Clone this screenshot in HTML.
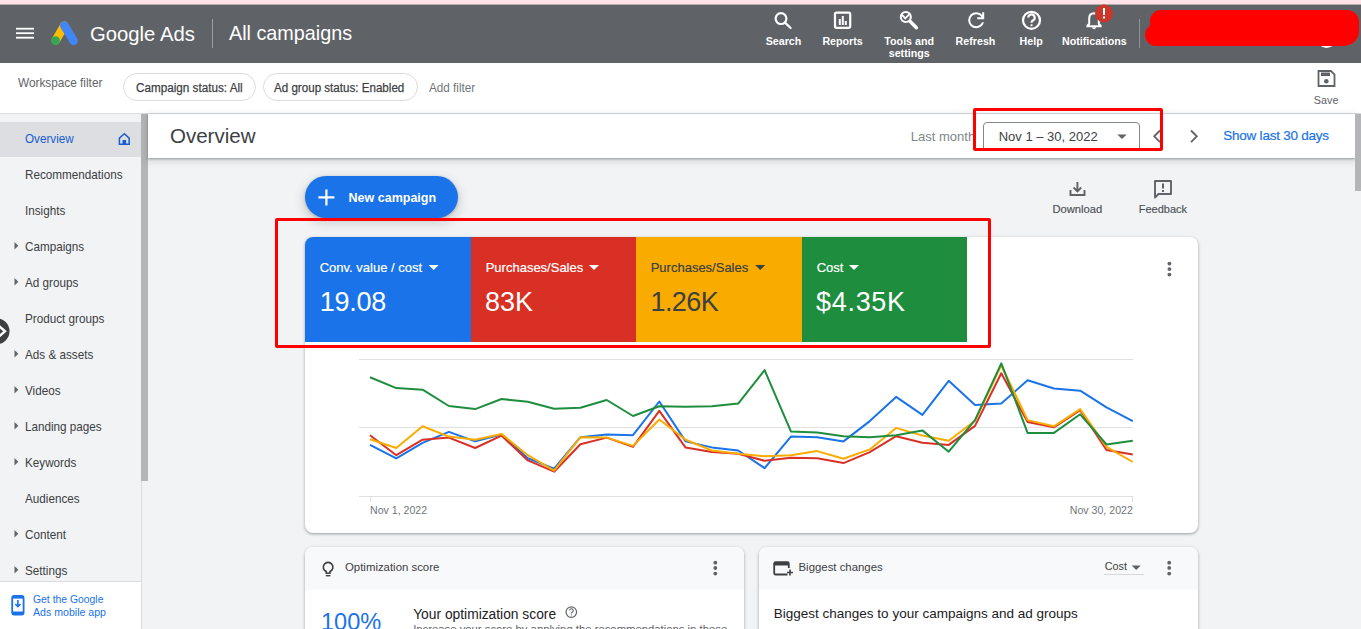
<!DOCTYPE html>
<html><head><meta charset="utf-8"><title>Google Ads</title><style>
*{box-sizing:border-box;margin:0;padding:0}
html,body{width:1361px;height:629px;overflow:hidden;background:#f1f3f4;font-family:"Liberation Sans",sans-serif;position:relative}
.a{position:absolute}
.t{position:absolute;line-height:1;white-space:nowrap}
svg{position:absolute;overflow:visible}
</style></head><body>
<div class="a" style="left:0px;top:0px;width:1361px;height:4px;background:#fde2e7"></div>
<div class="a" style="left:0px;top:4px;width:1361px;height:1px;background:#b9a9ad"></div>
<div class="a" style="left:0px;top:5px;width:1361px;height:58px;background:#5f6368"></div>
<svg style="left:0;top:0" width="1" height="1"><g fill="#fff"><rect x="16" y="27.8" width="18" height="1.8"/><rect x="16" y="32.3" width="18" height="1.8"/><rect x="16" y="36.8" width="18" height="1.8"/></g></svg>
<svg style="left:0;top:0" width="1" height="1"><line x1="64.3" y1="25.6" x2="55.8" y2="40.3" stroke="#fbbc04" stroke-width="8.6" stroke-linecap="round"/><line x1="64.3" y1="25.6" x2="73.6" y2="40.8" stroke="#4285f4" stroke-width="8.6" stroke-linecap="round"/><circle cx="55.6" cy="40.6" r="4.4" fill="#34a853"/></svg>
<div class="t" style="left:90px;top:23.82px;font-size:20.3px;color:#fff;">Google Ads</div>
<div class="a" style="left:212px;top:19px;width:1px;height:29px;background:#9a9da1"></div>
<div class="t" style="left:229px;top:24.24px;font-size:19.8px;color:#fff;">All campaigns</div>
<div class="t" style="left:783.5px;transform:translateX(-50%) ;top:35.94px;font-size:10.7px;color:#fff;font-weight:bold;">Search</div>
<div class="t" style="left:842.6px;transform:translateX(-50%) ;top:35.94px;font-size:10.7px;color:#fff;font-weight:bold;">Reports</div>
<div class="t" style="left:975.5px;transform:translateX(-50%) ;top:35.94px;font-size:10.7px;color:#fff;font-weight:bold;">Refresh</div>
<div class="t" style="left:1031.2px;transform:translateX(-50%) ;top:35.94px;font-size:10.7px;color:#fff;font-weight:bold;">Help</div>
<div class="t" style="left:1094.3px;transform:translateX(-50%) ;top:35.94px;font-size:10.7px;color:#fff;font-weight:bold;">Notifications</div>
<div class="t" style="left:909.2px;transform:translateX(-50%) ;top:35.94px;font-size:10.7px;color:#fff;font-weight:bold;">Tools and</div>
<div class="t" style="left:909.2px;transform:translateX(-50%) ;top:47.74px;font-size:10.7px;color:#fff;font-weight:bold;">settings</div>
<svg style="left:0;top:0" width="1" height="1">
<g fill="none" stroke="#fff" stroke-width="2.2">
<circle cx="781" cy="18.6" r="5.4"/>
<line x1="785" y1="22.6" x2="790.6" y2="28" stroke-linecap="round"/>
<rect x="835" y="12.6" width="15.2" height="15.2" rx="1.5"/>
<circle cx="1031.5" cy="20.3" r="8.5" stroke-width="2.2"/>

</g>
<g fill="#fff">
<rect x="838.8" y="19" width="2" height="6"/><rect x="841.8" y="16" width="2" height="9"/><rect x="844.8" y="21" width="2" height="4"/>
<path transform="translate(964.2,8.2)" d="M12 20q-3.35 0-5.675-2.325Q4 15.35 4 12q0-3.35 2.325-5.675Q8.65 4 12 4q1.725 0 3.3.713 1.575.712 2.7 2.037V4h2v7h-7V9h4.2q-.8-1.4-2.187-2.2Q13.625 6 12 6 9.5 6 7.75 7.75T6 12q0 2.5 1.75 4.25T12 18q1.925 0 3.475-1.1T17.65 14h2.1q-.7 2.65-2.85 4.325Q14.75 20 12 20Z"/>
<path d="M1028.3 17.6 a3.2 3.2 0 1 1 4.6 2.9 c-1 .5 -1.4 1 -1.4 2.3" fill="none" stroke="#fff" stroke-width="2.1"/>
<rect x="1030.6" y="24.3" width="1.9" height="1.9"/>
<path d="M1094 13.2 c-3.2 0 -4.8 2.4 -4.8 5.4 v5.2 l-1.8 1.8 v.6 h13.2 v-.6 l-1.8 -1.8 v-5.2 c0 -3 -1.6 -5.4 -4.8 -5.4z" fill="none" stroke="#fff" stroke-width="2"/>
<path d="M1092 27.3 h4 a2 2 0 0 1 -4 0z"/>

</g>
<g fill="none" stroke="#fff" stroke-linecap="round"><circle cx="905.8" cy="17" r="5" stroke-width="2.1"/><path d="M902.3 15.2 l2.9 3.2 l3.6 -3.6" stroke-width="1.8"/><path d="M910 21.3 l6.4 6.4" stroke-width="3.4"/></g>
<circle cx="1104" cy="13.5" r="9" fill="#c8372a"/>
<rect x="1103" y="8" width="2" height="7" fill="#fff"/><rect x="1103" y="16.5" width="2" height="2" fill="#fff"/>
</svg>
<div class="a" style="left:1139px;top:19px;width:1px;height:29px;background:#8e9195"></div>
<svg style="left:0;top:0" width="1" height="1"><circle cx="1326.5" cy="38" r="10" fill="#fff"/></svg>
<div class="a" style="left:1150px;top:10px;width:209px;height:36px;background:#ff0000;border-radius:11px 12px 15px 6px"></div>
<div class="a" style="left:1145px;top:24px;width:180px;height:22px;background:#ff0000;border-radius:11px"></div>
<div class="a" style="left:0px;top:63px;width:1361px;height:50px;background:#fff"></div>
<div class="a" style="left:0px;top:113px;width:1361px;height:1px;background:#dadce0"></div>
<div class="t" style="left:17.6px;transform:scaleX(0.9346);transform-origin:0 0;top:76.81px;font-size:12.63px;color:#5f6368;">Workspace filter</div>
<div class="a" style="left:123px;top:73px;width:132.5px;height:28px;border:1px solid #dadce0;border-radius:14px"></div>
<div class="t" style="left:135.8px;transform:scaleX(0.8850);transform-origin:0 0;top:80.81px;font-size:13.22px;color:#3c4043;-webkit-text-stroke:0.25px #3c4043">Campaign status: All</div>
<div class="a" style="left:263px;top:73px;width:154.6px;height:28px;border:1px solid #dadce0;border-radius:14px"></div>
<div class="t" style="left:274.4px;transform:scaleX(0.8850);transform-origin:0 0;top:80.90px;font-size:13.11px;color:#3c4043;-webkit-text-stroke:0.25px #3c4043">Ad group status: Enabled</div>
<div class="t" style="left:428.5px;transform:scaleX(0.8850);transform-origin:0 0;top:80.81px;font-size:13.22px;color:#70757a;">Add filter</div>
<svg style="left:0;top:0" width="1" height="1"><path d="M1318.5 71 h12.5 l3.5 3.5 v11.5 h-16z" fill="none" stroke="#5f6368" stroke-width="1.8"/><rect x="1321" y="72.5" width="9" height="3.5" fill="#5f6368"/><circle cx="1326.3" cy="81.3" r="2.3" fill="#5f6368"/></svg>
<div class="t" style="left:1313.8px;top:94.86px;font-size:10.8px;color:#5f6368;">Save</div>
<div class="a" style="left:0px;top:114px;width:141px;height:467px;background:#f1f3f4"></div>
<div class="a" style="left:0px;top:122px;width:141px;height:35px;background:#dcdee1"></div>
<div class="a" style="left:141px;top:114px;width:7px;height:367px;background:#b4b5b7"></div>
<div class="a" style="left:141px;top:481px;width:1px;height:148px;background:#dadce0"></div>
<div class="t" style="left:25px;transform:scaleX(0.8929);transform-origin:0 0;top:131.91px;font-size:13.1px;color:#1a5dd0;">Overview</div>
<div class="t" style="left:25px;transform:scaleX(0.8929);transform-origin:0 0;top:167.91px;font-size:13.1px;color:#3c4043;">Recommendations</div>
<div class="t" style="left:25px;transform:scaleX(0.8929);transform-origin:0 0;top:203.91px;font-size:13.1px;color:#3c4043;">Insights</div>
<div class="t" style="left:25px;transform:scaleX(0.8929);transform-origin:0 0;top:239.91px;font-size:13.1px;color:#3c4043;">Campaigns</div>
<svg style="left:0;top:0" width="1" height="1"><path d="M14.5 242 l3.8 3.8 l-3.8 3.8z" fill="#5f6368"/></svg>
<div class="t" style="left:25px;transform:scaleX(0.8929);transform-origin:0 0;top:275.91px;font-size:13.1px;color:#3c4043;">Ad groups</div>
<svg style="left:0;top:0" width="1" height="1"><path d="M14.5 278 l3.8 3.8 l-3.8 3.8z" fill="#5f6368"/></svg>
<div class="t" style="left:25px;transform:scaleX(0.8929);transform-origin:0 0;top:311.91px;font-size:13.1px;color:#3c4043;">Product groups</div>
<div class="t" style="left:25px;transform:scaleX(0.8929);transform-origin:0 0;top:347.91px;font-size:13.1px;color:#3c4043;">Ads &amp; assets</div>
<svg style="left:0;top:0" width="1" height="1"><path d="M14.5 350 l3.8 3.8 l-3.8 3.8z" fill="#5f6368"/></svg>
<div class="t" style="left:25px;transform:scaleX(0.8929);transform-origin:0 0;top:383.91px;font-size:13.1px;color:#3c4043;">Videos</div>
<svg style="left:0;top:0" width="1" height="1"><path d="M14.5 386 l3.8 3.8 l-3.8 3.8z" fill="#5f6368"/></svg>
<div class="t" style="left:25px;transform:scaleX(0.8929);transform-origin:0 0;top:419.91px;font-size:13.1px;color:#3c4043;">Landing pages</div>
<svg style="left:0;top:0" width="1" height="1"><path d="M14.5 422 l3.8 3.8 l-3.8 3.8z" fill="#5f6368"/></svg>
<div class="t" style="left:25px;transform:scaleX(0.8929);transform-origin:0 0;top:455.91px;font-size:13.1px;color:#3c4043;">Keywords</div>
<svg style="left:0;top:0" width="1" height="1"><path d="M14.5 458 l3.8 3.8 l-3.8 3.8z" fill="#5f6368"/></svg>
<div class="t" style="left:25px;transform:scaleX(0.8929);transform-origin:0 0;top:491.91px;font-size:13.1px;color:#3c4043;">Audiences</div>
<div class="t" style="left:25px;transform:scaleX(0.8929);transform-origin:0 0;top:527.91px;font-size:13.1px;color:#3c4043;">Content</div>
<svg style="left:0;top:0" width="1" height="1"><path d="M14.5 530 l3.8 3.8 l-3.8 3.8z" fill="#5f6368"/></svg>
<div class="t" style="left:25px;transform:scaleX(0.8929);transform-origin:0 0;top:563.91px;font-size:13.1px;color:#3c4043;">Settings</div>
<svg style="left:0;top:0" width="1" height="1"><path d="M14.5 566 l3.8 3.8 l-3.8 3.8z" fill="#5f6368"/></svg>
<svg style="left:0;top:0" width="1" height="1"><path d="M124.3 133.8 l-4.9 4.3 v6.1 h9.8 v-6.1z" fill="none" stroke="#1a5dd0" stroke-width="1.5" stroke-linejoin="miter"/><rect x="122.5" y="140" width="3.6" height="4.5" fill="#1a5dd0"/></svg>
<svg style="left:0;top:0" width="1" height="1"><circle cx="-3.5" cy="331.3" r="13" fill="#3c4043"/><path d="M-1 326 l6 5.3 l-6 5.3" fill="none" stroke="#fff" stroke-width="2.4"/></svg>
<div class="a" style="left:0px;top:581px;width:141px;height:48px;background:#fff;border-top:1px solid #dadce0"></div>
<svg style="left:0;top:0" width="1" height="1"><rect x="12.2" y="596" width="11.4" height="18.6" rx="2" fill="none" stroke="#1a73e8" stroke-width="1.8"/><rect x="12.2" y="596" width="11.4" height="2.6" fill="#1a73e8"/><rect x="12.2" y="611.5" width="11.4" height="3" fill="#1a73e8"/><path d="M17.9 600 v6.5 M15.3 604 l2.6 2.6 l2.6 -2.6" fill="none" stroke="#1a73e8" stroke-width="1.6"/></svg>
<div class="t" style="left:32.5px;transform:scaleX(0.9259);transform-origin:0 0;top:593.69px;font-size:11.23px;color:#1a73e8;">Get the Google</div>
<div class="t" style="left:32.5px;transform:scaleX(0.9259);transform-origin:0 0;top:606.61px;font-size:11.45px;color:#1a73e8;">Ads mobile app</div>
<div class="a" style="left:148px;top:114px;width:1207px;height:44px;background:#fff;box-shadow:0 1px 2px rgba(60,64,67,.4),0 2px 6px 2px rgba(60,64,67,.15)"></div>
<div class="a" style="left:1355px;top:114px;width:6px;height:77px;background:#b4b5b7"></div>
<div class="t" style="left:170px;top:125.65px;font-size:20.5px;color:#3c4043;">Overview</div>
<div class="t" style="left:910.8px;top:130.00px;font-size:13.0px;color:#80868b;">Last month</div>
<div class="a" style="left:983px;top:122.4px;width:157px;height:28px;background:#fff;border:1px solid #80868b;border-radius:4px 4px 0 0"></div>
<div class="t" style="left:998.7px;top:129.90px;font-size:13.0px;color:#3c4043;">Nov 1 &ndash; 30, 2022</div>
<svg style="left:0;top:0" width="1" height="1"><path d="M1117.3 134.4 h9.4 l-4.7 4.7z" fill="#5f6368"/><path d="M1160 130.5 l-5.8 5.8 l5.8 5.8 M1191 130.5 l5.8 5.8 l-5.8 5.8" fill="none" stroke="#5f6368" stroke-width="1.8"/></svg>
<div class="t" style="left:1223.3px;top:128.57px;font-size:13.5px;color:#1a73e8;letter-spacing:-0.24px;-webkit-text-stroke:0.2px #1a73e8">Show last 30 days</div>
<div class="a" style="left:305px;top:175.6px;width:153px;height:42px;background:#1a73e8;border-radius:21px;box-shadow:0 1px 3px rgba(60,64,67,.3),0 4px 8px 3px rgba(60,64,67,.15)"></div>
<svg style="left:0;top:0" width="1" height="1"><path d="M326.4 189.4 v16 M318.4 197.4 h16" stroke="#fff" stroke-width="2.2"/></svg>
<div class="t" style="left:348.6px;top:191.72px;font-size:12.5px;color:#fff;font-weight:bold;">New campaign</div>
<svg style="left:0;top:0" width="1" height="1"><g fill="none" stroke="#5f6368" stroke-width="1.9"><path d="M1077.4 182 v9 M1073.6 187.5 l3.8 3.8 l3.8 -3.8"/><path d="M1070.5 190 v5 h14 v-5"/><path d="M1155 181 h16 v13 h-12.5 l-3.5 3.5z" stroke-linejoin="round"/></g><rect x="1162" y="183.5" width="2" height="5" fill="#5f6368"/><rect x="1162" y="190" width="2" height="2" fill="#5f6368"/></svg>
<div class="t" style="left:1052.4px;top:203.52px;font-size:11.2px;color:#4d5156;-webkit-text-stroke:0.15px #4d5156">Download</div>
<div class="t" style="left:1138.7px;top:203.69px;font-size:11.0px;color:#4d5156;-webkit-text-stroke:0.15px #4d5156">Feedback</div>
<div class="a" style="left:305px;top:237px;width:893px;height:296px;background:#fff;border-radius:8px;box-shadow:0 1px 2px rgba(60,64,67,.3),0 1px 3px 1px rgba(60,64,67,.15)"></div>
<div class="a" style="left:305px;top:237px;width:166px;height:105px;background:#1a73e8;border-radius:8px 0 0 0;"></div>
<div class="a" style="left:471px;top:237px;width:165px;height:105px;background:#d93025;"></div>
<div class="a" style="left:636px;top:237px;width:166px;height:105px;background:#f9ab00;"></div>
<div class="a" style="left:802px;top:237px;width:165px;height:105px;background:#1e8e3e;"></div>
<div class="t" style="left:319.7px;top:261.40px;font-size:13.0px;color:#fff;-webkit-text-stroke:0.2px #fff">Conv. value / cost</div>
<div class="t" style="left:319.8px;top:289.14px;font-size:27.0px;color:#fff;letter-spacing:-0.3px">19.08</div>
<svg style="left:0;top:0" width="1" height="1"><path d="M428.6 265 h10 l-5 5z" fill="#fff"/></svg>
<div class="t" style="left:485.7px;top:261.40px;font-size:13.0px;color:#fff;-webkit-text-stroke:0.2px #fff">Purchases/Sales</div>
<div class="t" style="left:485px;top:289.14px;font-size:27.0px;color:#fff;letter-spacing:0px">83K</div>
<svg style="left:0;top:0" width="1" height="1"><path d="M589 265 h10 l-5 5z" fill="#fff"/></svg>
<div class="t" style="left:650.7px;top:261.40px;font-size:13.0px;color:#3c4043;-webkit-text-stroke:0.2px #3c4043">Purchases/Sales</div>
<div class="t" style="left:650.5px;top:289.14px;font-size:27.0px;color:#3c4043;letter-spacing:-0.6px">1.26K</div>
<svg style="left:0;top:0" width="1" height="1"><path d="M755.2 265 h10 l-5 5z" fill="#3c4043"/></svg>
<div class="t" style="left:816.7px;top:261.40px;font-size:13.0px;color:#fff;-webkit-text-stroke:0.2px #fff">Cost</div>
<div class="t" style="left:816px;top:289.14px;font-size:27.0px;color:#fff;letter-spacing:0.7px">$4.35K</div>
<svg style="left:0;top:0" width="1" height="1"><path d="M849 265 h10 l-5 5z" fill="#fff"/></svg>
<svg style="left:0;top:0" width="1" height="1"><circle cx="1169.4" cy="263.6" r="1.9" fill="#5f6368"/><circle cx="1169.4" cy="269.1" r="1.9" fill="#5f6368"/><circle cx="1169.4" cy="274.6" r="1.9" fill="#5f6368"/></svg>
<svg style="left:0;top:0" width="1" height="1"><g fill="#e0e0e0"><rect x="359" y="359" width="774" height="1"/><rect x="359" y="427" width="774" height="1"/><rect x="359" y="496" width="774" height="1"/><rect x="370" y="496" width="1" height="6"/><rect x="1132" y="496" width="1" height="6"/></g><polyline points="370.0,444.9 396.3,458.3 422.6,442.8 448.9,431.9 475.2,441.4 501.5,434.5 527.8,458.3 554.1,468.6 580.4,437.2 606.7,434.5 633.0,435.2 659.3,401.5 685.6,441.4 711.9,447.4 738.2,450.5 764.6,468.2 790.9,436.6 817.2,437.2 843.5,441.4 869.8,421.1 896.1,396.9 922.4,414.9 948.7,380.8 975.0,405.0 1001.3,403.6 1027.6,380.2 1053.9,388.5 1080.2,390.7 1106.5,407.3 1132.8,421.1" fill="none" stroke="#1a73e8" stroke-width="2" stroke-linejoin="round"/><polyline points="370.0,435.2 396.3,455.2 422.6,439.7 448.9,437.6 475.2,448.0 501.5,435.6 527.8,460.4 554.1,471.7 580.4,444.3 606.7,437.6 633.0,446.9 659.3,410.8 685.6,447.6 711.9,452.1 738.2,453.8 764.6,460.8 790.9,457.7 817.2,458.3 843.5,463.1 869.8,452.1 896.1,436.2 922.4,442.8 948.7,444.9 975.0,425.9 1001.3,373.2 1027.6,422.1 1053.9,427.3 1080.2,410.2 1106.5,450.0 1132.8,454.6" fill="none" stroke="#d93025" stroke-width="2" stroke-linejoin="round"/><polyline points="370.0,439.3 396.3,448.0 422.6,426.3 448.9,436.6 475.2,439.7 501.5,433.9 527.8,455.2 554.1,470.7 580.4,437.2 606.7,437.6 633.0,445.9 659.3,419.5 685.6,439.7 711.9,450.5 738.2,453.8 764.6,456.2 790.9,455.2 817.2,451.1 843.5,458.7 869.8,449.4 896.1,427.9 922.4,435.6 948.7,440.7 975.0,420.7 1001.3,365.3 1027.6,420.1 1053.9,426.3 1080.2,409.1 1106.5,446.9 1132.8,462.0" fill="none" stroke="#f9ab00" stroke-width="2" stroke-linejoin="round"/><polyline points="370.0,377.3 396.3,388.1 422.6,389.7 448.9,406.0 475.2,409.1 501.5,399.0 527.8,401.7 554.1,408.7 580.4,407.7 606.7,400.0 633.0,416.0 659.3,406.2 685.6,406.7 711.9,406.2 738.2,403.6 764.6,370.1 790.9,431.4 817.2,432.5 843.5,436.2 869.8,437.2 896.1,435.2 922.4,430.4 948.7,451.7 975.0,420.1 1001.3,363.3 1027.6,432.9 1053.9,432.9 1080.2,414.3 1106.5,444.5 1132.8,440.7" fill="none" stroke="#1e8e3e" stroke-width="2" stroke-linejoin="round"/></svg>
<div class="t" style="left:370px;top:504.83px;font-size:10.6px;color:#70757a;">Nov 1, 2022</div>
<div class="t" style="right:228.20000000000005px;top:504.83px;font-size:10.6px;color:#70757a;">Nov 30, 2022</div>
<div class="a" style="left:275px;top:218px;width:716px;height:130px;border:3px solid #ff0000;border-radius:2px"></div>
<div class="a" style="left:973px;top:108px;width:190px;height:43px;border:3px solid #ff0000;border-radius:2px"></div>
<div class="a" style="left:305px;top:547px;width:439px;height:100px;background:#fff;border-radius:8px;box-shadow:0 1px 2px rgba(60,64,67,.3),0 1px 3px 1px rgba(60,64,67,.15);overflow:hidden"></div>
<div class="a" style="left:305px;top:547px;width:439px;height:42.5px;background:#f8f9fa;border-radius:8px 8px 0 0"></div>
<div class="a" style="left:759px;top:547px;width:439px;height:100px;background:#fff;border-radius:8px;box-shadow:0 1px 2px rgba(60,64,67,.3),0 1px 3px 1px rgba(60,64,67,.15);overflow:hidden"></div>
<div class="a" style="left:759px;top:547px;width:439px;height:42.5px;background:#f8f9fa;border-radius:8px 8px 0 0"></div>
<svg style="left:0;top:0" width="1" height="1"><path d="M326.3 571.6 a4.8 4.8 0 1 1 3.6 0 v1.6 h-3.6z" fill="none" stroke="#3c4043" stroke-width="1.6"/><rect x="325.8" y="575" width="4.6" height="1.4" fill="#3c4043"/></svg>
<div class="t" style="left:345px;top:561.85px;font-size:11.4px;color:#3c4043;">Optimization score</div>
<svg style="left:0;top:0" width="1" height="1"><circle cx="715.3" cy="562.7" r="1.9" fill="#5f6368"/><circle cx="715.3" cy="568" r="1.9" fill="#5f6368"/><circle cx="715.3" cy="573.6" r="1.9" fill="#5f6368"/></svg>
<div class="t" style="left:321px;top:610.62px;font-size:23.6px;color:#1a73e8;">100%</div>
<div class="t" style="left:413.2px;top:607.62px;font-size:13.8px;color:#202124;">Your optimization score</div>
<svg style="left:0;top:0" width="1" height="1"><circle cx="571.3" cy="612.1" r="5.3" fill="none" stroke="#5f6368" stroke-width="1.2"/><path d="M569.6 610.6 a1.8 1.8 0 1 1 2.6 1.6 c-.6 .3 -.8 .6 -.8 1.3" fill="none" stroke="#5f6368" stroke-width="1.1"/><rect x="570.9" y="614.4" width="1" height="1" fill="#5f6368"/></svg>
<div class="t" style="left:413.2px;top:623.93px;font-size:11.3px;color:#5f6368;">Increase your score by applying the recommendations in these</div>
<svg style="left:0;top:0" width="1" height="1"><path d="M787.5 574.5 h-12 a1.3 1.3 0 0 1 -1.3 -1.3 v-9.7 a1.3 1.3 0 0 1 1.3 -1.3 h12 a1.3 1.3 0 0 1 1.3 1.3 v4.5" fill="none" stroke="#3c4043" stroke-width="1.8"/><rect x="774.2" y="562.2" width="14.6" height="3.3" fill="#3c4043"/><path d="M790 569.5 v6 M787 572.5 h6" stroke="#3c4043" stroke-width="1.6"/></svg>
<div class="t" style="left:798.5px;top:561.85px;font-size:11.4px;color:#3c4043;">Biggest changes</div>
<div class="t" style="left:1104.8px;top:560.56px;font-size:10.8px;color:#3c4043;">Cost</div>
<svg style="left:0;top:0" width="1" height="1"><path d="M1131.7 565.5 h9 l-4.5 4.5z" fill="#5f6368"/></svg>
<div class="a" style="left:1104px;top:574px;width:40px;height:1px;background:#d5d7db"></div>
<svg style="left:0;top:0" width="1" height="1"><circle cx="1169.2" cy="562.7" r="1.9" fill="#5f6368"/><circle cx="1169.2" cy="567.9" r="1.9" fill="#5f6368"/><circle cx="1169.2" cy="573.6" r="1.9" fill="#5f6368"/></svg>
<div class="t" style="left:773.8px;top:606.57px;font-size:13.5px;color:#202124;">Biggest changes to your campaigns and ad groups</div>
</body></html>
